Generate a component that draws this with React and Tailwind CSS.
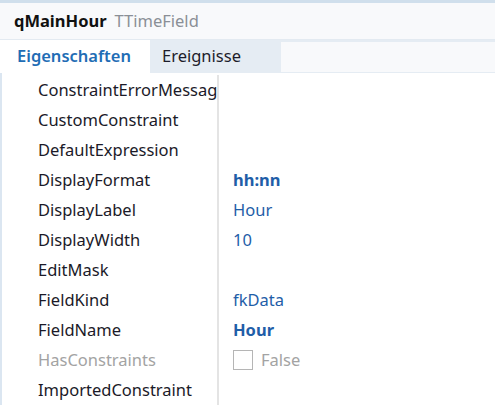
import React from 'react';

const rows = [
    { name: 'ConstraintErrorMessag' },
    { name: 'CustomConstraint' },
    { name: 'DefaultExpression' },
    { name: 'DisplayFormat', value: 'hh:nn', bold: true },
    { name: 'DisplayLabel', value: 'Hour' },
    { name: 'DisplayWidth', value: '10' },
    { name: 'EditMask' },
    { name: 'FieldKind', value: 'fkData' },
    { name: 'FieldName', value: 'Hour', bold: true },
    { name: 'HasConstraints', check: true, disabled: true },
    { name: 'ImportedConstraint' },
];

const App = () => {
    return (
        <div className="w-[495px] h-[410px] overflow-hidden bg-white border-t-[3px] border-[#d0dfec] text-[16.5px] font-['Segoe_UI','Noto_Sans',sans-serif]">
            {/* Kopfzeile */}
            <div className="h-[37px] bg-[#f8f9fb] border-b border-[#e3eaf1] flex items-center pl-[14px] gap-[8px]">
                <span className="font-bold text-[#111]">qMainHour</span>
                <span className="text-[#8a8f96]">TTimeField</span>
            </div>
            {/* Tabs */}
            <div className="h-[33px] bg-[#e5ecf3] flex">
                <div className="w-[150px] bg-white flex items-center pl-[17px] text-[#1f6db5] font-semibold">Eigenschaften</div>
                <div className="w-[131px] flex items-center pl-[12px] text-[#1c1c2a]">Ereignisse</div>
                <div className="flex-1 mt-[2px] mb-[1px] bg-[#f8f9fb]" />
            </div>
            {/* Eigenschaften */}
            <div className="border-l-2 border-[#dbe6f1] pt-[2px]">
                {rows.map((r) => (
                    <div key={r.name} className="h-[30px] flex">
                        <div className={`w-[215px] pl-[36px] flex items-center overflow-hidden whitespace-nowrap ${r.disabled ? 'text-[#a3a3a3]' : 'text-[#1b1a28]'}`}>
                            {r.name}
                        </div>
                        <div className="w-[2px] bg-[#e4e4e4]" />
                        <div className="flex-1 pl-[14px] flex items-center">
                            {r.check ? (
                                <span className="flex items-center gap-[8px] text-[#a3a3a3]">
                                    <span className="w-[20px] h-[20px] border border-[#b5b5b5] bg-white" />
                                    False
                                </span>
                            ) : (
                                <span className={`text-[#1f5ea8] ${r.bold ? 'font-bold' : ''}`}>{r.value}</span>
                            )}
                        </div>
                    </div>
                ))}
            </div>
        </div>
    );
};

export default App;
